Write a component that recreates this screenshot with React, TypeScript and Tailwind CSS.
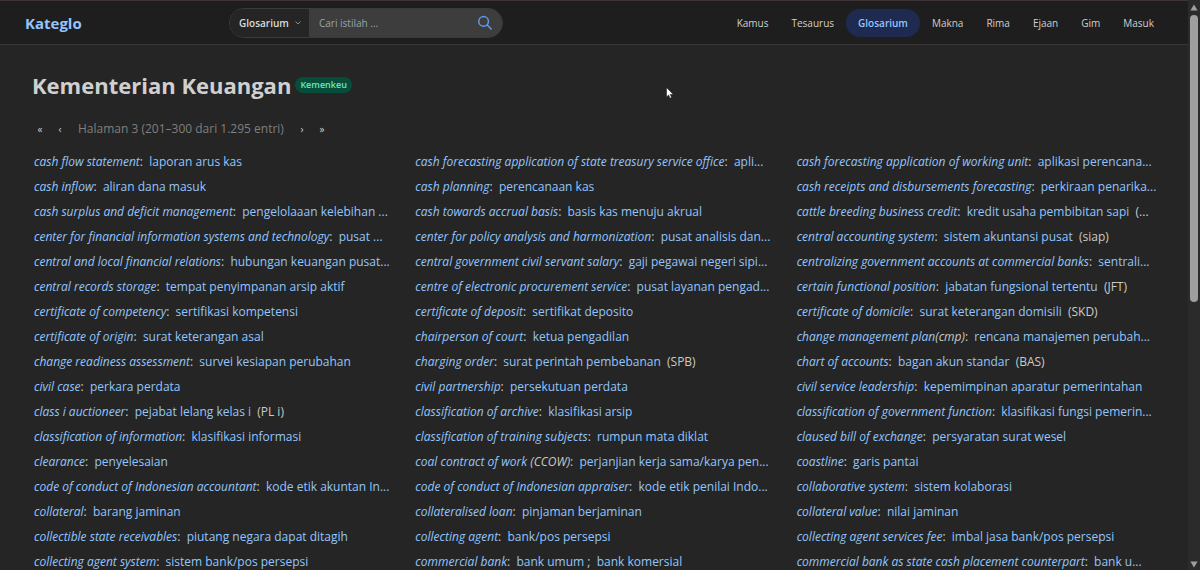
import React from 'react';

interface Entry {
    term: string;
    // abbreviation that follows the foreign term, with its leading space if any
    termNote?: string;
    meanings: string[];
    note?: string;
}

const navItems = ['Kamus', 'Tesaurus', 'Glosarium', 'Makna', 'Rima', 'Ejaan', 'Gim', 'Masuk'];

const entries: Entry[] = [
    { term: 'cash flow statement', meanings: ['laporan arus kas'] },
    { term: 'cash forecasting application of state treasury service office', meanings: ['apli...'] },
    { term: 'cash forecasting application of working unit', meanings: ['aplikasi perencana...'] },
    { term: 'cash inflow', meanings: ['aliran dana masuk'] },
    { term: 'cash planning', meanings: ['perencanaan kas'] },
    { term: 'cash receipts and disbursements forecasting', meanings: ['perkiraan penarika...'] },
    { term: 'cash surplus and deficit management', meanings: ['pengelolaaan kelebihan ...'] },
    { term: 'cash towards accrual basis', meanings: ['basis kas menuju akrual'] },
    { term: 'cattle breeding business credit', meanings: ['kredit usaha pembibitan sapi'], note: '(...' },
    { term: 'center for financial information systems and technology', meanings: ['pusat ...'] },
    { term: 'center for policy analysis and harmonization', meanings: ['pusat analisis dan...'] },
    { term: 'central accounting system', meanings: ['sistem akuntansi pusat'], note: '(siap)' },
    { term: 'central and local financial relations', meanings: ['hubungan keuangan pusat...'] },
    { term: 'central government civil servant salary', meanings: ['gaji pegawai negeri sipi...'] },
    { term: 'centralizing government accounts at commercial banks', meanings: ['sentrali...'] },
    { term: 'central records storage', meanings: ['tempat penyimpanan arsip aktif'] },
    { term: 'centre of electronic procurement service', meanings: ['pusat layanan pengad...'] },
    { term: 'certain functional position', meanings: ['jabatan fungsional tertentu'], note: '(JFT)' },
    { term: 'certificate of competency', meanings: ['sertifikasi kompetensi'] },
    { term: 'certificate of deposit', meanings: ['sertifikat deposito'] },
    { term: 'certificate of domicile', meanings: ['surat keterangan domisili'], note: '(SKD)' },
    { term: 'certificate of origin', meanings: ['surat keterangan asal'] },
    { term: 'chairperson of court', meanings: ['ketua pengadilan'] },
    { term: 'change management plan', termNote: '(cmp)', meanings: ['rencana manajemen perubah...'] },
    { term: 'change readiness assessment', meanings: ['survei kesiapan perubahan'] },
    { term: 'charging order', meanings: ['surat perintah pembebanan'], note: '(SPB)' },
    { term: 'chart of accounts', meanings: ['bagan akun standar'], note: '(BAS)' },
    { term: 'civil case', meanings: ['perkara perdata'] },
    { term: 'civil partnership', meanings: ['persekutuan perdata'] },
    { term: 'civil service leadership', meanings: ['kepemimpinan aparatur pemerintahan'] },
    { term: 'class i auctioneer', meanings: ['pejabat lelang kelas i'], note: '(PL i)' },
    { term: 'classification of archive', meanings: ['klasifikasi arsip'] },
    { term: 'classification of government function', meanings: ['klasifikasi fungsi pemerin...'] },
    { term: 'classification of information', meanings: ['klasifikasi informasi'] },
    { term: 'classification of training subjects', meanings: ['rumpun mata diklat'] },
    { term: 'claused bill of exchange', meanings: ['persyaratan surat wesel'] },
    { term: 'clearance', meanings: ['penyelesaian'] },
    { term: 'coal contract of work', termNote: ' (CCOW)', meanings: ['perjanjian kerja sama/karya pen...'] },
    { term: 'coastline', meanings: ['garis pantai'] },
    { term: 'code of conduct of Indonesian accountant', meanings: ['kode etik akuntan In...'] },
    { term: 'code of conduct of Indonesian appraiser', meanings: ['kode etik penilai Indo...'] },
    { term: 'collaborative system', meanings: ['sistem kolaborasi'] },
    { term: 'collateral', meanings: ['barang jaminan'] },
    { term: 'collateralised loan', meanings: ['pinjaman berjaminan'] },
    { term: 'collateral value', meanings: ['nilai jaminan'] },
    { term: 'collectible state receivables', meanings: ['piutang negara dapat ditagih'] },
    { term: 'collecting agent', meanings: ['bank/pos persepsi'] },
    { term: 'collecting agent services fee', meanings: ['imbal jasa bank/pos persepsi'] },
    { term: 'collecting agent system', meanings: ['sistem bank/pos persepsi'] },
    { term: 'commercial bank', meanings: ['bank umum', 'bank komersial'] },
    { term: 'commercial bank as state cash placement counterpart', meanings: ['bank u...'] },
];

const Header: React.FC = () => {
    return (
        <header className="flex h-[45px] items-center border-t border-b border-t-[#3d3335] border-b-[#383838] bg-[#1e1e1e] pr-[23px] pl-[25px]">
            <a href="#" className="w-[204px] pt-0.5 text-[15px] font-bold text-[#93c5fd]">Kateglo</a>

            <form className="flex h-[30px] w-[274px] overflow-hidden rounded-full border border-[#3a3a3a] bg-[#3d3d3d]">
                <div className="relative w-[79px] bg-[#252525]">
                    <select
                        aria-label="Kategori"
                        defaultValue="Glosarium"
                        className="h-full w-full appearance-none bg-[#252525] pl-[9px] text-[10px] font-semibold text-[#dcdcdc] outline-none"
                    >
                        <option>Kamus</option>
                        <option>Tesaurus</option>
                        <option>Glosarium</option>
                        <option>Makna</option>
                    </select>
                    <svg className="pointer-events-none absolute top-[11px] right-2 h-1.5 w-1.5" viewBox="0 0 6 6" fill="none" stroke="#8a8a8a" strokeWidth="1">
                        <path d="M0.5 1.5 L3 4 L5.5 1.5" />
                    </svg>
                </div>
                <input
                    type="text"
                    aria-label="Cari istilah"
                    placeholder="Cari istilah ..."
                    className="min-w-0 flex-1 bg-transparent pt-0.5 pl-2.5 text-[10px] text-[#dcdcdc] outline-none placeholder:text-[#9ca3af]"
                />
                <button type="submit" aria-label="Cari" className="flex w-[34px] items-center justify-center">
                    <svg className="h-4 w-4" viewBox="0 0 16 16" fill="none" stroke="#5b9bea" strokeWidth="1.5" strokeLinecap="round">
                        <circle cx="6.6" cy="6.4" r="4.8" />
                        <path d="M10.2 10 L14.2 14" />
                    </svg>
                </button>
            </form>

            <nav className="ml-auto flex items-center gap-px">
                {navItems.map((item) => (
                    <a
                        key={item}
                        href="#"
                        className={
                            item === 'Glosarium'
                                ? 'flex h-7 items-center rounded-full bg-[#1e2a4f] px-3 pt-0.5 text-[10px] font-semibold text-[#93c5fd]'
                                : 'flex h-7 items-center px-[11px] pt-0.5 text-[10px] text-[#cfcfcf]'
                        }
                    >
                        {item}
                    </a>
                ))}
            </nav>
        </header>
    );
};

const Pagination: React.FC = () => {
    return (
        <div className="-ml-0.5 flex h-6 items-center text-[12px] text-[#cfcfcf]">
            <button aria-label="Halaman pertama" className="w-5 text-[10px]">«</button>
            <button aria-label="Halaman sebelumnya" className="w-5 text-[10px]">‹</button>
            <span className="px-2 font-medium text-[#7f7f7f]">Halaman 3 (201–300 dari 1.295 entri)</span>
            <button aria-label="Halaman berikutnya" className="w-5 text-[10px]">›</button>
            <button aria-label="Halaman terakhir" className="w-5 text-[10px]">»</button>
        </div>
    );
};

const EntryRow: React.FC<{ entry: Entry }> = ({ entry }) => {
    return (
        <li className="h-[25px] overflow-hidden px-0.5 text-[12px] leading-[25px] whitespace-pre text-[#cbcbc4]">
            <i>
                <a href="#" className="text-[#93c5fd]">{entry.term}</a>
                {entry.termNote}
            </i>
            {':  '}
            {entry.meanings.map((meaning, i) => (
                <React.Fragment key={meaning}>
                    {i > 0 && ' ;  '}
                    <a href="#" className="text-[#93c5fd]">{meaning}</a>
                </React.Fragment>
            ))}
            {entry.note && '  ' + entry.note}
        </li>
    );
};

const Scrollbar: React.FC = () => {
    return (
        <div aria-hidden="true" className="flex w-3 shrink-0 flex-col items-center bg-[#2b2b2b] pt-1 pb-0.5">
            <svg className="h-[7px] w-2" viewBox="0 0 8 7" fill="#9f9f9f">
                <path d="M4 0.5 L7.6 6.5 H0.4 Z" />
            </svg>
            <div className="w-full flex-1 px-0.5 py-1">
                <div className="h-[53%] w-full rounded-full bg-[#9f9f9f]" />
            </div>
            <svg className="h-[7px] w-2" viewBox="0 0 8 7" fill="#9f9f9f">
                <path d="M4 6.5 L7.6 0.5 H0.4 Z" />
            </svg>
        </div>
    );
};

const App: React.FC = () => {
    return (
        <div className="flex h-screen overflow-hidden bg-[#252525] font-['Segoe_UI','Open_Sans',sans-serif]">
            <div className="min-w-0 flex-1">
                <Header />
                <main className="px-8 pt-6">
                    <div className="flex h-8 items-center gap-1">
                        <h1 className="text-[22px] leading-8 font-bold text-[#d0d0d0]">Kementerian Keuangan</h1>
                        <span className="rounded-full bg-[#064e3b] px-[5px] text-[9px] leading-4 font-semibold text-[#6ee7b7]">Kemenkeu</span>
                    </div>
                    <div className="pt-4 pb-2">
                        <Pagination />
                    </div>
                    <ul className="grid grid-cols-3 gap-x-5">
                        {entries.map((entry) => (
                            <EntryRow key={entry.term} entry={entry} />
                        ))}
                    </ul>
                </main>
            </div>
            <Scrollbar />

            {/* mouse pointer */}
            <svg className="pointer-events-none absolute top-[87px] left-[666px] h-3 w-2" viewBox="0 0 8 12" fill="#fff" stroke="#111" strokeWidth="0.5">
                <path d="M0.5 0.5 V10 L2.6 8 L4 11.3 L5.6 10.6 L4.2 7.4 H7.3 Z" />
            </svg>
        </div>
    );
};

export default App;
